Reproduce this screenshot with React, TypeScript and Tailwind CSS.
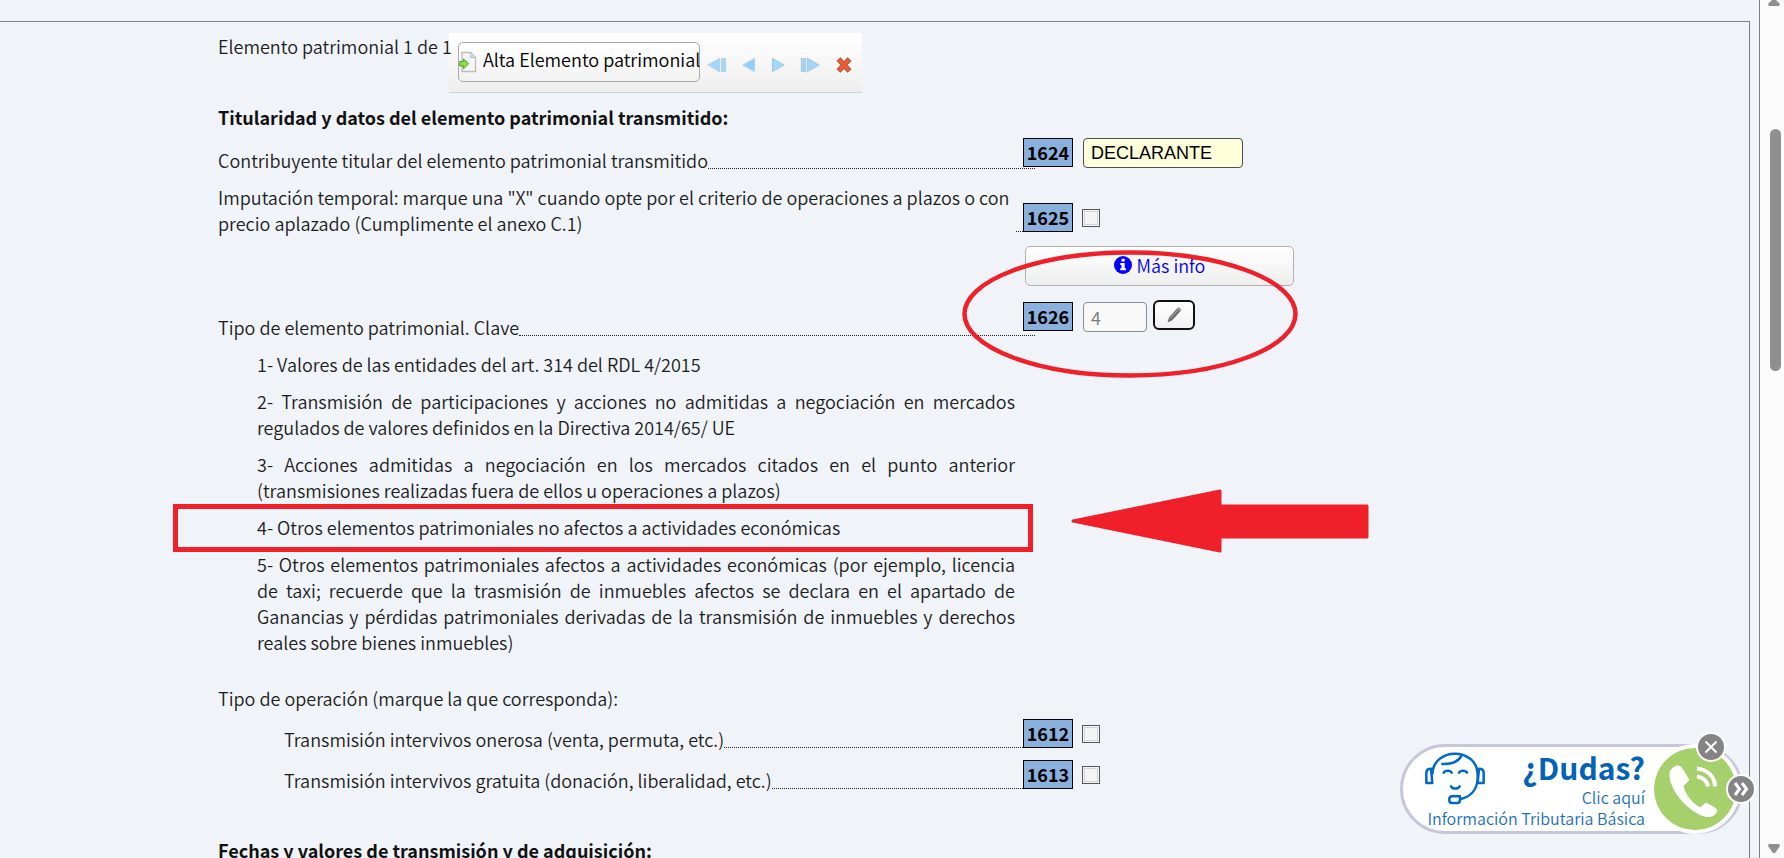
import type { ReactNode } from 'react';

function CodeBox({ children }: { children: ReactNode }) {
  return (
    <span className="flex h-[29px] w-[50px] shrink-0 items-center justify-center border border-black bg-[#8ab1dd] pb-[2px] font-bold text-black">
      {children}
    </span>
  );
}

function Leader() {
  return <span className="mb-1 min-w-0 flex-1 self-end border-b border-dotted border-[#222]" />;
}

function Check({ id }: { id: string }) {
  return (
    <input
      id={id}
      type="checkbox"
      className="h-[18px] w-[18px] shrink-0 appearance-none border border-[#54565c] bg-[#f4f4f5] shadow-[inset_0_0_0_1px_#f4f4f5,inset_0_0_0_2px_#d2d4d8] checked:bg-[#8ab1dd]"
    />
  );
}

const keys = [
  '1- Valores de las entidades del art. 314 del RDL 4/2015',
  '2- Transmisión de participaciones y acciones no admitidas a negociación en mercados regulados de valores definidos en la Directiva 2014/65/ UE',
  '3- Acciones admitidas a negociación en los mercados citados en el punto anterior (transmisiones realizadas fuera de ellos u operaciones a plazos)',
  '4- Otros elementos patrimoniales no afectos a actividades económicas',
  '5- Otros elementos patrimoniales afectos a actividades económicas (por ejemplo, licencia de taxi; recuerde que la trasmisión de inmuebles afectos se declara en el apartado de Ganancias y pérdidas patrimoniales derivadas de la transmisión de inmuebles y derechos reales sobre bienes inmuebles)',
];

const operations = [
  { code: '1612', text: 'Transmisión intervivos onerosa (venta, permuta, etc.)' },
  { code: '1613', text: 'Transmisión intervivos gratuita (donación, liberalidad, etc.)' },
];

function Toolbar() {
  return (
    <div className="flex h-[60px] w-[413px] items-start border-b border-[#cfcfd1] bg-linear-to-b from-white to-[#eeeeef] pt-[9px] pl-[9px]">
      <button
        type="button"
        className="flex h-10 w-[242px] items-center gap-[6px] rounded-[5px] border border-[#aaa] bg-linear-to-b from-white to-[#f2f2f2] pb-[6px] whitespace-nowrap text-black"
      >
        <svg width="18" height="22" viewBox="0 0 18 22" className="mt-[6px] shrink-0">
          <path d="M3 1.5h8.500l5 5V20.500H3z" fill="#f5f5f5" stroke="#bdbdbd" strokeWidth="1.4" />
          <path d="M11.500 1.500v5h5z" fill="#ddd" stroke="#bdbdbd" />
          <path d="M.7 10.500h3.800V7.800l5.200 5-5.200 5v-2.800H.7z" fill="#8bdc4e" stroke="#4aa52a" />
        </svg>
        Alta Elemento patrimonial
      </button>
      <div className="flex h-10 flex-1 items-center justify-between pt-[6px] pr-[9px] pl-[7px]">
        <button type="button" aria-label="Primero">
          <svg width="20" height="16" viewBox="0 0 20 16" fill="#a5d5fb" stroke="#b3d3e8" strokeWidth="1.2">
            <path d="M1 8 12.500 1.500v13z" />
            <path d="M14.500 1.500h4v13h-4z" />
          </svg>
        </button>
        <button type="button" aria-label="Anterior">
          <svg width="14" height="16" viewBox="0 0 14 16" fill="#93cdfb" stroke="#b3d3e8" strokeWidth="1.2">
            <path d="M1 8 12.500 1.500v13z" />
          </svg>
        </button>
        <button type="button" aria-label="Siguiente">
          <svg width="14" height="16" viewBox="0 0 14 16" fill="#a5d8fc" stroke="#a5cbe2" strokeWidth="1.2">
            <path d="M13 8 1.500 1.500v13z" />
          </svg>
        </button>
        <button type="button" aria-label="Último">
          <svg width="20" height="16" viewBox="0 0 20 16" fill="#a5d5fb" stroke="#a5cbe2" strokeWidth="1.2">
            <path d="M19 8 7.500 1.500v13z" />
            <path d="M1.500 1.500h4v13h-4z" />
          </svg>
        </button>
        <button type="button" aria-label="Eliminar">
          <svg width="18" height="18" viewBox="0 0 18 18">
            <path d="M3.500 3 14.500 15M14.500 3 3.500 15" stroke="#a9533a" strokeWidth="5.400" />
            <path d="M4 3.500 14 14.500M14 3.500 4 14.500" stroke="#ee5a33" strokeWidth="3.600" />
          </svg>
        </button>
      </div>
    </div>
  );
}

function HelpWidget() {
  return (
    <aside className="absolute right-[41px] bottom-6 h-[90px] w-[343px] rounded-full border-[3px] border-[#c3c9da] bg-white">
      <a href="#ayuda" className="block h-full w-full pr-[95px] text-right text-[#1a70bd]">
        <svg className="absolute top-1 left-[21px]" width="62" height="56" viewBox="132 92 186 168" fill="none" stroke="#0068c6" strokeWidth="7.500" strokeLinecap="round" strokeLinejoin="round">
          <path d="M153 145c-9 0-14 5-14 12v31h18zM297 145c9 0 14 5 14 12v31h-18z" />
          <path d="M157 160c2-36 31-60 68-60s66 24 68 60v17c-3 32-22 52-48 58" />
          <path d="M187 131c27 1 49-8 58-26" />
          <path d="M191 157c4-8 20-8 24 0M237 157c4-8 20-8 24 0M213 198c5 9 21 9 26 0" />
          <path d="M216 228h24v12c0 5-3 8-8 8h-16c-11 0-11-20 0-20z" />
        </svg>
        <span className="block text-[30px] leading-10 font-bold text-[#0062b8]">¿Dudas?</span>
        <span className="block text-base leading-[21px]">Clic aquí</span>
        <span className="block text-base leading-[21px] whitespace-nowrap">Información Tributaria Básica</span>
      </a>
      <button type="button" aria-label="Llamar" className="absolute top-[-3px] right-0 h-[90px] w-[90px] rounded-full bg-white p-1">
        <svg className="h-full w-full" viewBox="0 0 82 82">
          <circle cx="41" cy="41" r="41" fill="#a6d06b" />
          <path d="M17 22c3-4 7-5 10-3l8 13-6 6c2 9 9 17 17 22l6-5 9 5c2 1 2 3 1 5-4 5-11 4-17 1C30 58 18 43 16 29c0-3 0-5 1-7z" fill="#fff" stroke="#fff" strokeLinejoin="round" />
          <path d="M43 28.500c6 1 10 4 11 10M43 20.500c10 1 18 8 18 18" fill="none" stroke="#fff" strokeWidth="4" />
        </svg>
      </button>
      <button type="button" aria-label="Cerrar" className="absolute top-[-15px] right-[14px] rounded-full bg-white p-[2px]">
        <svg width="26" height="26" viewBox="0 0 26 26">
          <circle cx="13" cy="13" r="13" fill="#848484" />
          <path d="M7.500 7.500 18.500 18.500M18.500 7.500 7.500 18.500" stroke="#fff" strokeWidth="2" />
        </svg>
      </button>
      <button type="button" aria-label="Ocultar" className="absolute top-[27px] right-[-16px] rounded-full bg-white p-[2px]">
        <svg width="26" height="26" viewBox="0 0 26 26">
          <circle cx="13" cy="13" r="13" fill="#848484" />
          <path d="M7 7 11.500 13 7 19M14 7 18.500 13 14 19" fill="none" stroke="#fff" strokeWidth="3" />
        </svg>
      </button>
    </aside>
  );
}

export default function App() {
  return (
    <div className="relative flex h-screen overflow-hidden bg-[#f0f4f9] font-['Noto_Sans_CJK_SC','Noto_Sans',sans-serif] text-lg leading-[26px] font-[350] text-[#1c1c1c]">
      <div className="flex min-w-0 flex-1 border-r border-[#808080] pt-[21px] pr-[9px]">
        <main className="relative min-w-0 flex-1 border-t border-r border-[#808080] pt-[11px] pl-[218px]">
          <div className="flex items-start">
            <p className="relative w-[231px] shrink-0 whitespace-nowrap">Elemento patrimonial 1 de 1</p>
            <Toolbar />
          </div>

          <h2 className="mt-[11px] font-bold text-[#111]">Titularidad y datos del elemento patrimonial transmitido:</h2>

          <section className="mt-2 flex flex-col gap-[11px]">
            <div className="flex h-[35px]">
              <label htmlFor="f1624" className="-mr-3 flex w-[817px] shrink-0 self-end">
                Contribuyente titular del elemento patrimonial transmitido
                <Leader />
              </label>
              <div className="relative flex items-start gap-[10px]">
                <CodeBox>1624</CodeBox>
                <input
                  id="f1624"
                  defaultValue="DECLARANTE"
                  className="h-[30px] w-40 rounded-[4px] border border-[#4d4f55] bg-[#ffffdc] px-[7px] font-['Liberation_Sans',sans-serif] text-lg text-black"
                />
              </div>
            </div>

            <div className="flex">
              <label htmlFor="f1625" className="flex w-[805px] shrink-0">
                <span className="w-[798px]">
                  Imputación temporal: marque una "X" cuando opte por el criterio de operaciones a plazos o con precio aplazado (Cumplimente el anexo C.1)
                </span>
                <Leader />
              </label>
              <div className="flex items-center gap-[9px] pt-[15px]">
                <CodeBox>1625</CodeBox>
                <Check id="f1625" />
              </div>
            </div>

            <div className="-mt-px flex">
              <label htmlFor="f1626" className="-mr-3 flex w-[817px] shrink-0 self-end">
                Tipo de elemento patrimonial. Clave
                <Leader />
              </label>
              <div className="relative flex flex-col gap-4 pb-2">
                <button
                  type="button"
                  className="ml-[2px] flex h-10 w-[269px] items-center justify-center gap-[5px] rounded-[5px] border border-[#b0b0b0] bg-linear-to-b from-white to-[#eee] pb-[2px] text-[#00f]"
                >
                  <svg width="18" height="18" viewBox="0 0 18 18">
                    <circle cx="9" cy="9" r="9" fill="#00f" />
                    <path d="M7.500 2.800h3.200v2.700H7.500zM6.300 7h4.400v5.300h1.200v2H6.300v-2h1.200V9H6.300z" fill="#fff" />
                  </svg>
                  Más info
                </button>
                <div className="flex items-start">
                  <CodeBox>1626</CodeBox>
                  <input
                    id="f1626"
                    defaultValue="4"
                    readOnly
                    className="ml-[10px] h-[30px] w-16 rounded-[4px] border border-[#8a8d93] bg-[#f8f8f8] px-[7px] text-[#777]"
                  />
                  <button
                    type="button"
                    aria-label="Editar clave"
                    className="-mt-[2px] ml-[6px] flex h-[30px] w-[42px] items-center justify-center rounded-[6px] border-2 border-[#111] bg-linear-to-b from-white to-[#f1f1f1]"
                  >
                    <svg width="16" height="18" viewBox="0 0 16 18">
                      <path d="M1.500 16.500 3 11.500 11 2.500l3.500 2.700L6 14.500z" fill="#707070" />
                      <path d="M11 2.500 12.500 1l3 2.500-1 1.700z" fill="#999" />
                      <path d="M4.500 12 12 3.800" stroke="#aaa" />
                    </svg>
                  </button>
                </div>
              </div>
            </div>

            <ul className="ml-[39px] flex w-[758px] flex-col gap-[11px] text-justify">
              {keys.map((k) => (
                <li key={k}>{k}</li>
              ))}
            </ul>
          </section>

          <section className="mt-[30px]">
            <p>Tipo de operación (marque la que corresponda):</p>
            <div className="mt-2 flex flex-col gap-2">
              {operations.map((o) => (
                <div key={o.code} className="flex h-[33px]">
                  <label htmlFor={'f' + o.code} className="flex w-[805px] shrink-0 self-end pl-[66px]">
                    {o.text}
                    <Leader />
                  </label>
                  <div className="flex items-center gap-[9px] self-start">
                    <CodeBox>{o.code}</CodeBox>
                    <Check id={'f' + o.code} />
                  </div>
                </div>
              ))}
            </div>
          </section>

          <h2 className="mt-11 font-bold text-[#111]">Fechas y valores de transmisión y de adquisición:</h2>

          <svg className="pointer-events-none absolute top-[228px] left-[962px]" width="336" height="128" viewBox="0 0 336 128">
            <ellipse cx="168" cy="64" rx="165.500" ry="61.500" fill="none" stroke="#ef202a" strokeWidth="4.500" />
          </svg>
          <div className="pointer-events-none absolute top-[482px] left-[173px] h-12 w-[860px] border-[5px] border-[#ef202a]" />
          <svg className="pointer-events-none absolute top-[467px] left-[1071px]" width="298" height="64" viewBox="0 0 298 64">
            <path d="M2 32 149 2v15h147v31H149v14z" fill="#ef202a" stroke="#ef202a" strokeWidth="3" strokeLinejoin="round" />
          </svg>
        </main>
      </div>

      <div className="flex w-6 shrink-0 flex-col items-center bg-[#fcfcfc] pl-[8px]">
        <svg width="12" height="6" viewBox="0 0 12 6" className="mr-1">
          <path d="M4 0h4l4 4-1 2H1L0 4z" fill="#8f8f8f" />
        </svg>
        <div className="mt-[123px] mr-[2px] h-[242px] w-[11px] rounded-full bg-[#8f8f8f]" />
        <svg width="12" height="10" viewBox="0 0 12 10" className="mt-auto mr-1 mb-1">
          <path d="M1 0h10l1 2-5 7H5L0 2z" fill="#8f8f8f" />
        </svg>
      </div>

      <HelpWidget />
    </div>
  );
}
